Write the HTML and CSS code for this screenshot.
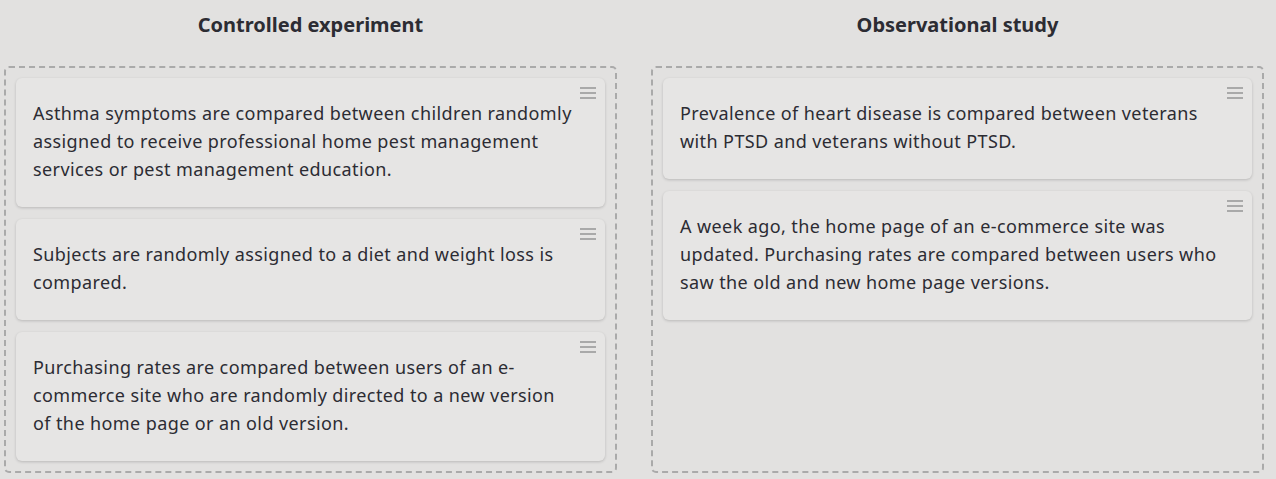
FILE: index.html
```html
<!DOCTYPE html>
<html>
<head>
<meta charset="utf-8">
<link rel="stylesheet" href="styles.css">
</head>
<body>
<div class="board">
  <section class="col">
    <h2 class="col-title">Controlled experiment</h2>
    <div class="zone">
      <div class="card"><span class="handle"><i></i><i></i><i></i></span>Asthma symptoms are compared between children randomly assigned to receive professional home pest management services or pest management education.</div>
      <div class="card"><span class="handle"><i></i><i></i><i></i></span>Subjects are randomly assigned to a diet and weight loss is compared.</div>
      <div class="card"><span class="handle"><i></i><i></i><i></i></span>Purchasing rates are compared between users of an e-commerce site who are randomly directed to a new version of the home page or an old version.</div>
    </div>
  </section>
  <section class="col">
    <h2 class="col-title">Observational study</h2>
    <div class="zone">
      <div class="card"><span class="handle"><i></i><i></i><i></i></span>Prevalence of heart disease is compared between veterans with PTSD and veterans without PTSD.</div>
      <div class="card"><span class="handle"><i></i><i></i><i></i></span>A week ago, the home page of an e-commerce site was updated. Purchasing rates are compared between users who saw the old and new home page versions.</div>
    </div>
  </section>
</div>
</body>
</html>
```
FILE: styles.css
```css
html, body {
  margin: 0;
  padding: 0;
  background: #e2e1e0;
  font-family: "Noto Sans", sans-serif;
  color: #2c2c33;
}
.board {
  display: grid;
  grid-template-columns: 1fr 1fr;
  column-gap: 34px;
  padding: 0 12px 6px 4px;
  height: 479px;
  box-sizing: border-box;
}
.col {
  display: flex;
  flex-direction: column;
}
.col-title {
  margin: 0;
  height: 66px;
  padding-top: 12px;
  box-sizing: border-box;
  text-align: center;
  font-size: 20px;
  font-weight: 700;
  line-height: 26px;
}
.zone {
  flex: 1;
  border: 2px dashed #aaaaaa;
  border-radius: 5px;
  padding: 10px;
  display: flex;
  flex-direction: column;
  gap: 12px;
}
.card {
  position: relative;
  background: #e6e5e4;
  border-radius: 6px;
  box-shadow: 0 1px 3px rgba(0,0,0,0.18);
  padding: 21px 29px 24px 17px;
  font-size: 18px;
  letter-spacing: 0.4px;
  line-height: 28px;
}
.handle {
  position: absolute;
  top: 9px;
  right: 9px;
  width: 16px;
  display: flex;
  flex-direction: column;
  gap: 3px;
}
.handle i {
  display: block;
  height: 2px;
  background: #a9a9a9;
}
```
